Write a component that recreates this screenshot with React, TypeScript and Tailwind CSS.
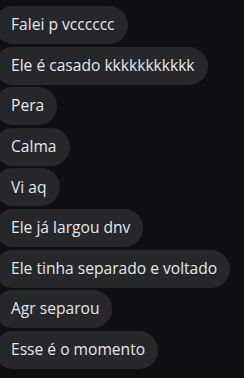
const messages = [
  'Falei p vcccccc',
  'Ele é casado kkkkkkkkkkk',
  'Pera',
  'Calma',
  'Vi aq',
  'Ele já largou dnv',
  'Ele tinha separado e voltado',
  'Agr separou',
  'Esse é o momento',
];

export default function App() {
  return (
    <div className="w-[244px] h-[378px] overflow-hidden bg-[#0e1014] pt-[6px] font-['Open_Sans',sans-serif]">
      <div className="flex flex-col items-start gap-[2.6px]">
        {messages.map((m) => (
          <div
            key={m}
            className="ml-[-6px] h-[38px] flex items-center rounded-full bg-[#25272b] pl-[17px] pr-[13px] text-[15.6px] text-[#e6e8ec] whitespace-nowrap"
          >
            {m}
          </div>
        ))}
      </div>
    </div>
  );
}
